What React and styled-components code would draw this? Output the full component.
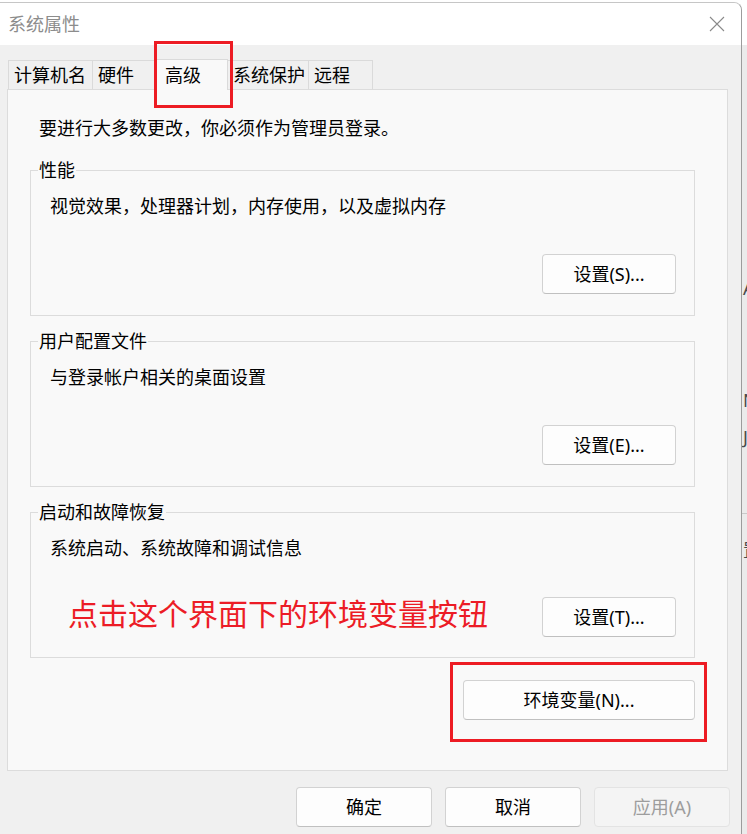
import React from "react";
import styled, { createGlobalStyle } from "styled-components";

const GlobalStyle = createGlobalStyle`
  html, body {
    margin: 0;
    background: #ffffff;
  }
  body {
    font-family: "Noto Sans", "Noto Sans CJK SC", sans-serif;
    font-size: 18px;
    color: #000;
  }
`;

const Page = styled.div`
  display: flex;
  align-items: stretch;
  padding-top: 2px;
  height: 834px;
  box-sizing: border-box;
  overflow: hidden;
`;

const Window = styled.div`
  width: 742px;
  flex-shrink: 0;
  box-sizing: border-box;
  border-top: 1px solid #c6c6c6;
  border-right: 1px solid #9c9c9c;
  border-top-right-radius: 8px;
  background: #f0f0f0;
  overflow: hidden;
`;

const TitleBar = styled.div`
  height: 42px;
  background: #fff;
  display: flex;
  align-items: center;
  justify-content: space-between;
  padding: 0 16px 0 8px;
`;

const Title = styled.span`
  color: #8c8c8c;
  line-height: 24px;
`;

const TabRow = styled.div`
  display: flex;
  align-items: flex-end;
  height: 31px;
  margin: 14px 0 -1px 8px;
  position: relative;
  z-index: 1;
`;

const Tab = styled.div`
  position: relative;
  box-sizing: border-box;
  width: ${(p) => p.$w}px;
  height: ${(p) => (p.$active ? 31 : 30)}px;
  margin-left: -1px;
  padding-left: ${(p) => (p.$active ? 9 : 5)}px;
  display: flex;
  align-items: center;
  border: 1px solid #dadada;
  border-bottom: ${(p) => (p.$active ? "none" : "1px solid #dcdcdc")};
  background: ${(p) => (p.$active ? "#f9f9f9" : "#f0f0f0")};
  z-index: ${(p) => (p.$active ? 2 : 1)};
  line-height: 24px;
  white-space: nowrap;

  &:first-child {
    margin-left: 0;
  }
`;

const Mark = styled.div`
  position: absolute;
  top: ${(p) => p.$t}px;
  left: ${(p) => p.$l}px;
  right: ${(p) => p.$r}px;
  bottom: ${(p) => p.$b}px;
  border: 3px solid #ed1c24;
  pointer-events: none;
  z-index: 5;
`;

const Panel = styled.div`
  width: 721px;
  height: 682px;
  margin-left: 7px;
  box-sizing: border-box;
  border: 1px solid #dcdcdc;
  background: #f9f9f9;
  padding: 0 32px 0 22px;
`;

const Notice = styled.div`
  margin: 26px 0 0 9px;
  line-height: 24px;
`;

const Group = styled.div`
  position: relative;
  box-sizing: border-box;
  height: 146px;
  margin-top: ${(p) => (p.$first ? 30 : 25)}px;
  border: 1px solid #dcdcdc;
  padding: 23px 18px 21px 19px;
  display: flex;
  flex-direction: column;
`;

const Legend = styled.span`
  position: absolute;
  top: -13px;
  left: 7px;
  padding: 0 1px;
  background: #f9f9f9;
  line-height: 24px;
`;

const Desc = styled.div`
  line-height: 24px;
`;

const GroupFooter = styled.div`
  margin-top: 36px;
  display: flex;
  align-items: center;
  justify-content: ${(p) => (p.$split ? "space-between" : "flex-end")};
`;

const RedNote = styled.span`
  color: #ec1c26;
  font-size: 30px;
  line-height: 36px;
  margin: 0 0 6px 18px;
`;

const Button = styled.button`
  box-sizing: border-box;
  width: ${(p) => p.$w}px;
  height: 40px;
  padding: 0;
  border: 1px solid ${(p) => (p.disabled ? "#e3e3e3" : "#d2d2d2")};
  border-bottom-color: ${(p) => (p.disabled ? "#e3e3e3" : "#c0c0c0")};
  border-radius: 4px;
  background: ${(p) => (p.disabled ? "#f4f4f4" : "#fdfdfd")};
  color: ${(p) => (p.disabled ? "#9d9d9d" : "#000")};
  font: inherit;
  font-size: 18px;
  line-height: 24px;
`;

const EnvRow = styled.div`
  display: flex;
  justify-content: flex-end;
  margin-top: 22px;
`;

const Annotated = styled.div`
  position: relative;
`;

const Footer = styled.div`
  display: flex;
  justify-content: flex-end;
  gap: 13px;
  margin-top: 16px;
  padding-right: 11px;
`;

const BackStrip = styled.div`
  flex: 1;
  background: linear-gradient(#ffffff 0 43px, #ebebeb 43px);
  color: #4a4a4a;
  overflow: hidden;
  display: flex;
  flex-direction: column;
`;

const StripText = styled.div`
  margin-top: ${(p) => p.$top}px;
  padding-left: 1px;
  line-height: 24px;
  white-space: nowrap;
`;

const StripRule = styled.div`
  margin-top: ${(p) => p.$top}px;
  height: 1px;
  background: #c9c9c9;
`;

function CloseIcon() {
  return (
    <svg width="16" height="16" viewBox="0 0 16 16">
      <path d="M1 1 L15 15 M15 1 L1 15" stroke="#8a8a8a" strokeWidth="1.1" fill="none" />
    </svg>
  );
}

const tabs = [
  { label: "计算机名", w: 85 },
  { label: "硬件", w: 64 },
  { label: "高级", w: 73, active: true },
  { label: "系统保护", w: 82 },
  { label: "远程", w: 65 },
];

export default function App() {
  return (
    <>
      <GlobalStyle />
      <Page>
        <Window>
          <TitleBar>
            <Title>系统属性</Title>
            <CloseIcon />
          </TitleBar>

          <TabRow>
            {tabs.map((t) => (
              <Tab key={t.label} $w={t.w} $active={t.active}>
                {t.label}
                {t.active && <Mark $t={-19} $l={-2} $r={-6} $b={-18} />}
              </Tab>
            ))}
          </TabRow>

          <Panel>
            <Notice>要进行大多数更改，你必须作为管理员登录。</Notice>

            <Group $first>
              <Legend>性能</Legend>
              <Desc>视觉效果，处理器计划，内存使用，以及虚拟内存</Desc>
              <GroupFooter>
                <Button $w={134}>设置(S)...</Button>
              </GroupFooter>
            </Group>

            <Group>
              <Legend>用户配置文件</Legend>
              <Desc>与登录帐户相关的桌面设置</Desc>
              <GroupFooter>
                <Button $w={134}>设置(E)...</Button>
              </GroupFooter>
            </Group>

            <Group>
              <Legend>启动和故障恢复</Legend>
              <Desc>系统启动、系统故障和调试信息</Desc>
              <GroupFooter $split>
                <RedNote>点击这个界面下的环境变量按钮</RedNote>
                <Button $w={134}>设置(T)...</Button>
              </GroupFooter>
            </Group>

            <EnvRow>
              <Annotated>
                <Button $w={232}>环境变量(N)...</Button>
                <Mark $t={-18} $l={-13} $r={-12} $b={-22} />
              </Annotated>
            </EnvRow>
          </Panel>

          <Footer>
            <Button $w={136}>确定</Button>
            <Button $w={136}>取消</Button>
            <Button $w={136} disabled>应用(A)</Button>
          </Footer>
        </Window>

        <BackStrip>
          <StripText $top={274}>A</StripText>
          <StripText $top={88}>N</StripText>
          <StripText $top={13}>J</StripText>
          <StripRule $top={64} />
          <StripText $top={24}>置</StripText>
        </BackStrip>
      </Page>
    </>
  );
}
